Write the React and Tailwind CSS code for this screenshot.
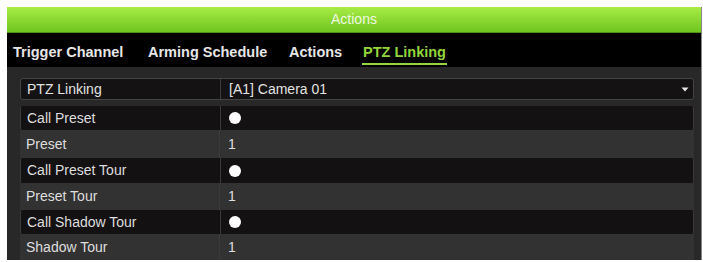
import React from 'react';

const rows = [
    { label: 'Call Preset', value: 'dot', dark: true, h: 'h-[24px]' },
    { label: 'Preset', value: '1', dark: false, h: 'h-[28px]' },
    { label: 'Call Preset Tour', value: 'dot', dark: true, h: 'h-[25px]' },
    { label: 'Preset Tour', value: '1', dark: false, h: 'h-[27px]' },
    { label: 'Call Shadow Tour', value: 'dot', dark: true, h: 'h-[24px]' },
    { label: 'Shadow Tour', value: '1', dark: false, h: 'h-[26px]' },
];

const tabs = [
    { name: 'Trigger Channel', w: 'w-[135px]' },
    { name: 'Arming Schedule', w: 'w-[141px]' },
    { name: 'Actions', w: 'w-[74px]' },
    { name: 'PTZ Linking', w: 'w-[100px]' },
];

const App = () => {
    return (
        <div className="w-[703px] h-[262px] bg-white pt-[7px] pl-[7px] pr-[1px] font-['Liberation_Sans',Arial,sans-serif]">
            <div className="h-[253px] flex flex-col border-r border-[#8a8a8a]">
                {/* title bar */}
                <div className="h-[26px] flex items-center justify-center bg-gradient-to-b from-[#a8ec45] to-[#70c51f] border-b border-[#4e8f14]">
                    <span className="text-[14px] text-[#eef8e0]">Actions</span>
                </div>

                {/* tabs */}
                <div className="h-[34px] bg-black flex items-center pl-[6px] pt-[3px]">
                    {tabs.map((t) => (
                        <div key={t.name} className={`${t.w} shrink-0`}>
                            <span className={`relative text-[14.5px] font-bold ${t.name === 'PTZ Linking' ? 'text-[#92d53c]' : 'text-[#e6e6e6]'}`}>
                                {t.name}
                                {t.name === 'PTZ Linking' && (
                                    <span className="absolute left-[-1px] right-[-1px] bottom-[-5px] h-[2px] bg-[#92d53c]"></span>
                                )}
                            </span>
                        </div>
                    ))}
                </div>

                {/* content */}
                <div className="flex-1 bg-[#282828] pt-[11px] pl-[13px] pr-[7px] flex flex-col">
                    <div className="h-[22px] flex items-center rounded-[3px] border border-[#444] bg-[#141212] text-[14px] text-[#e2e2e2]">
                        <div className="w-[200px] h-full flex items-center pl-[6px] border-r border-[#3c3c3c]">PTZ Linking</div>
                        <div className="flex-1 flex items-center pl-[8px]">[A1] Camera 01</div>
                        <svg width="8" height="5" viewBox="0 0 8 5" className="mr-[4px]">
                            <path d="M0.5 0.5 L7.5 0.5 L4 4.5 Z" fill="#e8e8e8" />
                        </svg>
                    </div>
                    <div className="mt-[6px] flex flex-col">
                        {rows.map((r) => (
                            <div
                                key={r.label}
                                className={`${r.h} flex items-center text-[14px] text-[#dedede] ${r.dark ? 'bg-[#141112] rounded-[2px] border-x border-[#3a3a3a]' : 'bg-[#333232]'}`}
                            >
                                <div className="w-[200px] h-full flex items-center pl-[6px] border-r border-[#3a3a3a]">{r.label}</div>
                                <div className="flex-1 flex items-center pl-[8px]">
                                    {r.value === 'dot' ? (
                                        <div className="w-[12px] h-[12px] rounded-full bg-white"></div>
                                    ) : (
                                        <span>{r.value}</span>
                                    )}
                                </div>
                            </div>
                        ))}
                    </div>
                </div>
            </div>
        </div>
    );
};

export default App;
